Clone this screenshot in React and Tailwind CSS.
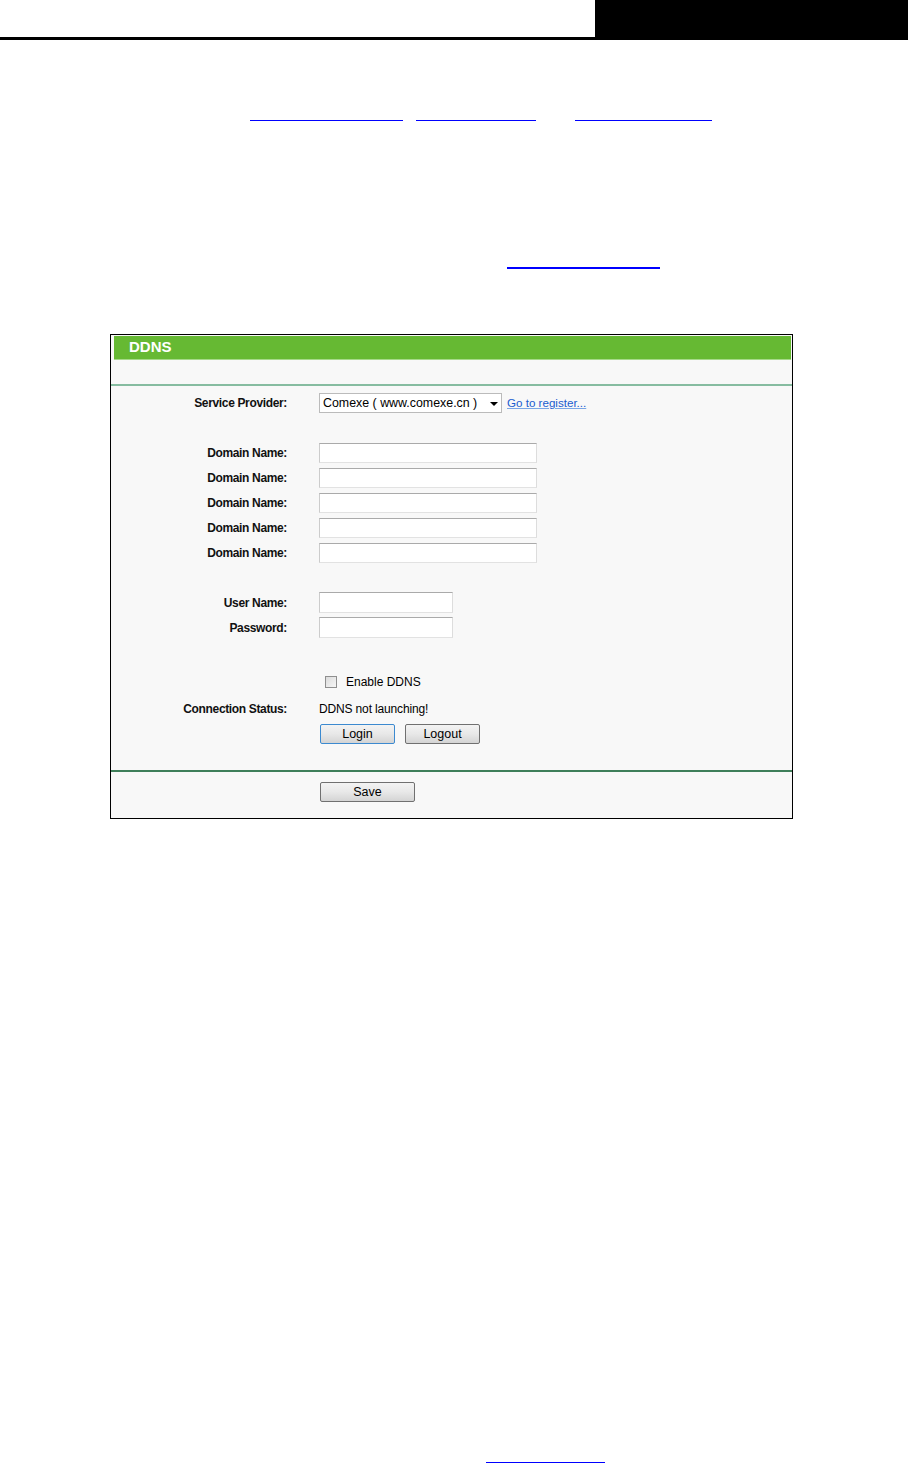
import React from "react";

const font = { fontFamily: '"Liberation Sans", Arial, sans-serif' };

function Label({ children }) {
  return (
    <div className="w-[176px] shrink-0 text-right text-[12px] font-bold tracking-[-0.35px] text-[#111]">
      {children}
    </div>
  );
}

function Row({ label, children, className = "" }) {
  return (
    <div className={`flex items-center ${className}`}>
      <Label>{label}</Label>
      <div className="ml-[32px] flex items-center">{children}</div>
    </div>
  );
}

function TextBox({ w, h = "h-[20px]" }) {
  return (
    <input
      type="text"
      className={`${w} ${h} border border-t-[#aaa] border-l-[#ccc] border-r-[#ddd] border-b-[#e2e2e2] bg-white outline-none`}
    />
  );
}

function Btn({ children, w, focused }) {
  return (
    <button
      className={`${w} h-[20px] rounded-[2px] border ${
        focused ? "border-[#3c8ad0]" : "border-[#707070]"
      } bg-gradient-to-b from-[#f3f3f3] via-[#e8e8e8] to-[#d4d4d4] text-[12.5px] leading-none text-black`}
    >
      {children}
    </button>
  );
}

export default function App() {
  return (
    <div className="min-h-[1463px] w-[908px] bg-white" style={font}>
      {/* page header */}
      <div className="flex h-10 items-end">
        <div className="h-[3px] flex-1 bg-black" />
        <div className="h-10 w-[313px] bg-black" />
      </div>

      {/* link underlines (text blank) */}
      <div className="mt-[80px] flex h-px">
        <div className="ml-[250px] w-[153px] bg-[#0000ff]" />
        <div className="ml-[13px] w-[120px] bg-[#0000ff]" />
        <div className="ml-[39px] w-[137px] bg-[#0000ff]" />
      </div>
      <div className="mt-[146px] flex h-[2px]">
        <div className="ml-[507px] w-[153px] bg-[#0000ff]" />
      </div>

      {/* DDNS panel */}
      <div className="ml-[110px] mt-[65px] h-[485px] w-[683px] border border-black bg-white">
        <div className="flex h-full flex-col bg-[#f8f8f8] pt-px">
          <div className="ml-[3px] mr-px flex h-[23px] items-center bg-[#66b933] pl-[15px] text-[15px] font-bold text-white">
            DDNS
          </div>
          <div className="ml-[3px] mr-px h-px bg-[#a6d98a]" />
          <div className="mt-[24px] h-[2px] bg-[#86bca0]" />

          <Row label="Service Provider:" className="mt-[7px]">
            <div className="relative flex h-[20px] w-[183px] items-center border border-[#bbb] bg-white pl-[3px] text-[12.4px] text-black">
              Comexe ( www.comexe.cn )
              <span className="absolute right-[3px] top-[8px] h-0 w-0 border-x-[4px] border-t-[4px] border-x-transparent border-t-black" />
            </div>
            <a className="ml-[5px] text-[11.6px] text-[#1a5ccf] underline decoration-[#7aa6e6]">
              Go to register...
            </a>
          </Row>

          <div className="mt-[30px] flex flex-col gap-[5px]">
            {[0, 1, 2, 3, 4].map((i) => (
              <Row key={i} label="Domain Name:">
                <TextBox w="w-[218px]" />
              </Row>
            ))}
          </div>

          <div className="mt-[29px] flex flex-col gap-[4px]">
            <Row label="User Name:">
              <TextBox w="w-[134px]" h="h-[21px]" />
            </Row>
            <Row label="Password:">
              <TextBox w="w-[134px]" h="h-[21px]" />
            </Row>
          </div>

          <Row label="" className="mt-[37px] h-[13px]">
            <span className="ml-[6px] h-[12px] w-[12px] border border-[#8f8f8f] bg-gradient-to-br from-[#dcdcdc] to-[#f6f6f6]" />
            <span className="ml-[9px] text-[12px] text-black">Enable DDNS</span>
          </Row>

          <Row label="Connection Status:" className="mt-[14px] h-[14px]">
            <span className="text-[12px] tracking-[-0.15px] text-black">DDNS not launching!</span>
          </Row>

          <div className="ml-[209px] mt-[8px] flex gap-[10px]">
            <Btn w="w-[75px]" focused>
              Login
            </Btn>
            <Btn w="w-[75px]">Logout</Btn>
          </div>

          <div className="mt-[26px] h-[2px] bg-[#3f7f5a]" />

          <div className="ml-[209px] mt-[7px]">
            <Btn w="w-[95px]">Save</Btn>
          </div>
        </div>
      </div>

      <div className="mt-[643px] flex h-px">
        <div className="ml-[486px] w-[119px] bg-[#0000ff]" />
      </div>
    </div>
  );
}
